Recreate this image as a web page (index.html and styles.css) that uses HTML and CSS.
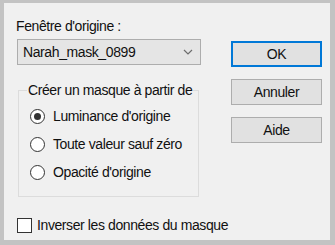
FILE: index.html
```html
<!DOCTYPE html>
<html lang="fr">
<head>
    <meta charset="UTF-8">
    <meta name="viewport" content="width=device-width, initial-scale=1.0">
    <title>Masque à partir d'une image</title>
    <link rel="stylesheet" href="styles.css">
</head>
<body>
    <div class="dialog">
        <div class="left">
            <div class="label">Fenêtre d'origine :</div>
            <div class="combo">
                <span>Narah_mask_0899</span>
                <svg class="chevron" width="10" height="6" viewBox="0 0 10 6">
                    <polyline points="1,1 5,5 9,1" fill="none" stroke="#6d6d6d" stroke-width="1.2"/>
                </svg>
            </div>

            <fieldset class="group">
                <legend>Créer un masque à partir de</legend>
                <div class="option"><span class="radio checked"></span>Luminance d'origine</div>
                <div class="option"><span class="radio"></span>Toute valeur sauf zéro</div>
                <div class="option"><span class="radio"></span>Opacité d'origine</div>
            </fieldset>

            <div class="check-row"><span class="checkbox"></span>Inverser les données du masque</div>
        </div>

        <div class="buttons">
            <div class="button default">OK</div>
            <div class="button">Annuler</div>
            <div class="button">Aide</div>
        </div>
    </div>
</body>
</html>
```

FILE: styles.css
```css
body {
    margin: 0;
    padding: 0;
    font-family: "Liberation Sans", Arial, sans-serif;
    font-size: 14px;
    letter-spacing: -0.4px;
    color: #111;
}

.dialog {
    width: 335px;
    height: 245px;
    box-sizing: border-box;
    border-style: solid;
    border-color: #c3c3c3;
    border-width: 3px 5px 5px 4px;
    background-color: #f0f0f0;
    display: flex;
    padding: 15px 0 0 13px;
    white-space: nowrap;
}

.left {
    width: 184px;
    flex-shrink: 0;
}

.label {
    line-height: 16px;
    margin-left: -1px;
}

.combo {
    margin-top: 5px;
    height: 26px;
    box-sizing: border-box;
    border: 1px solid #adadad;
    background-color: #e5e5e5;
    display: flex;
    align-items: center;
    justify-content: space-between;
    padding: 0 7px 0 5px;
}

.group {
    margin: 17px 2px 0 1px;
    padding: 4px 0 10px 11px;
    border: 1px solid #dcdcdc;
    min-width: 0;
}

.group legend {
    padding: 0 1px;
    margin-left: -3px;
    line-height: 16px;
    white-space: nowrap;
}

.option {
    height: 28px;
    display: flex;
    align-items: center;
}

.radio {
    flex-shrink: 0;
    width: 13px;
    height: 13px;
    border: 1px solid #333;
    border-radius: 50%;
    background-color: #fff;
    margin-right: 8px;
    display: flex;
    align-items: center;
    justify-content: center;
}

.radio.checked::after {
    content: "";
    width: 7px;
    height: 7px;
    border-radius: 50%;
    background-color: #333;
}

.check-row {
    margin-top: 20px;
    display: flex;
    align-items: center;
    line-height: 16px;
}

.checkbox {
    flex-shrink: 0;
    width: 13px;
    height: 13px;
    border: 1px solid #333;
    background-color: #fff;
    margin-right: 5px;
}

.buttons {
    margin-left: 30px;
    margin-top: 23px;
    width: 91px;
    display: flex;
    flex-direction: column;
    gap: 12px;
}

.button {
    height: 26px;
    box-sizing: border-box;
    border: 1px solid #adadad;
    background-color: #e1e1e1;
    display: flex;
    align-items: center;
    justify-content: center;
}

.button.default {
    border: 2px solid #0078d7;
}
```
